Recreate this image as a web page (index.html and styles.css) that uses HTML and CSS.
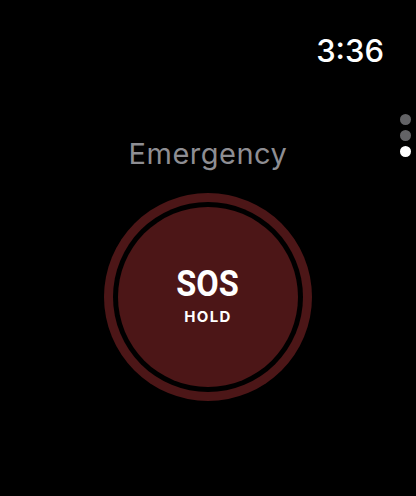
FILE: index.html
```html
<!DOCTYPE html>
<html>
<head>
<meta charset="utf-8">
<link rel="stylesheet" href="styles.css">
</head>
<body>
<div class="screen">
  <div class="status"><span class="time">3:36</span></div>
  <div class="pager">
    <span class="dot"></span>
    <span class="dot"></span>
    <span class="dot active"></span>
  </div>
  <div class="title">Emergency</div>
  <div class="sos-outer">
    <div class="sos-gap">
      <div class="sos-inner">
        <span class="sos">SOS</span>
        <span class="hold">HOLD</span>
      </div>
    </div>
  </div>
</div>
</body>
</html>
```
FILE: styles.css
```css
html, body {
  margin: 0;
  padding: 0;
  background: #000;
}
.screen {
  position: relative;
  width: 416px;
  height: 496px;
  background: #000;
  font-family: Inter, Roboto, "Liberation Sans", sans-serif;
  overflow: hidden;
}
.status {
  display: flex;
  justify-content: flex-end;
  padding: 33px 32px 0 0;
  height: 36px;
}
.time {
  color: #fff;
  font-size: 31px;
  line-height: 36px;
  font-weight: 500;
}
.pager {
  position: absolute;
  right: 5px;
  top: 114px;
  display: flex;
  flex-direction: column;
  gap: 5px;
}
.dot {
  width: 11px;
  height: 11px;
  border-radius: 50%;
  background: #636366;
}
.dot.active {
  background: #fff;
}
.title {
  margin-top: 69px;
  text-align: center;
  color: #8e8e93;
  font-size: 29px;
  line-height: 32px;
  letter-spacing: 0.5px;
}
.sos-outer {
  margin: 23px auto 0;
  width: 208px;
  height: 208px;
  box-sizing: border-box;
  border-radius: 50%;
  background: #4c1617;
  padding: 9px;
}
.sos-gap {
  width: 100%;
  height: 100%;
  box-sizing: border-box;
  border-radius: 50%;
  background: #000;
  padding: 5px;
}
.sos-inner {
  width: 100%;
  height: 100%;
  border-radius: 50%;
  background: #4c1617;
  display: flex;
  flex-direction: column;
  align-items: center;
  justify-content: center;
  color: #fff;
}
.sos {
  font-family: Roboto, "Liberation Sans", sans-serif;
  font-weight: 700;
  font-size: 37px;
  line-height: 40px;
  transform: scaleX(0.88);
  margin-top: -4px;
}
.hold {
  font-family: Inter, Roboto, sans-serif;
  font-weight: 700;
  font-size: 15px;
  line-height: 18px;
  letter-spacing: 1.4px;
  margin-top: 4px;
}
```
